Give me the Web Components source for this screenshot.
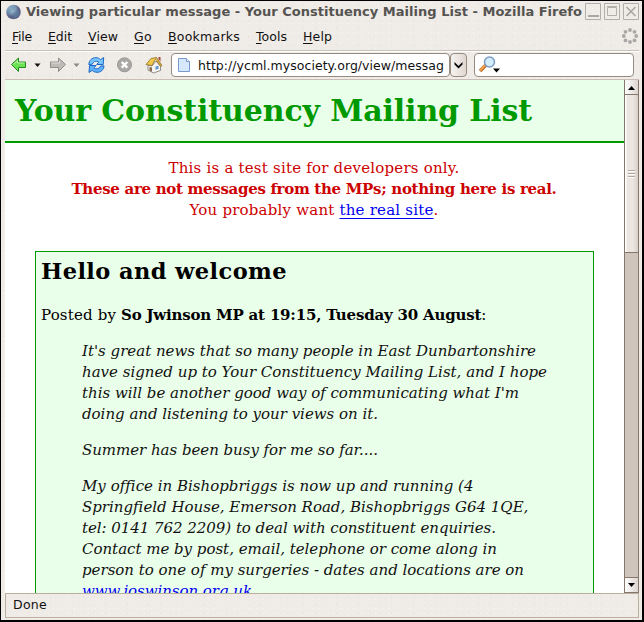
<!DOCTYPE html>
<html lang="en"><head><meta charset="utf-8"><title>Viewing particular message</title>
<style>
html,body{margin:0;width:644px;height:622px;overflow:hidden}
body{font-family:"DejaVu Sans",sans-serif;font-size:12.5px;color:#111}
u{text-underline-offset:2px;text-decoration-thickness:1px}
a{color:#00e;text-decoration:underline;text-decoration-thickness:1px;text-underline-offset:3px}
.byline{display:flex}
</style></head><body>
<browser-window>
<title-bar slot="title"><text-run w="556">Viewing particular message - Your Constituency Mailing List - Mozilla Firefo</text-run></title-bar>
<menu-bar slot="menu">
<text-run w="20"><u>F</u>ile</text-run><text-run w="24"><u>E</u>dit</text-run><text-run w="30"><u>V</u>iew</text-run><text-run w="18"><u>G</u>o</text-run><text-run w="72"><u>B</u>ookmarks</text-run><text-run w="31"><u>T</u>ools</text-run><text-run w="29"><u>H</u>elp</text-run>
</menu-bar>
<tool-bar slot="tools"><text-run w="246">http://ycml.mysociety.org/view/messag</text-run></tool-bar>
<page-view slot="page">
<page-heading><text-run w="517">Your Constituency Mailing List</text-run></page-heading>
<test-notice>
<text-run w="291">This is a test site for developers only.</text-run>
<text-run w="485"><b>These are not messages from the MPs; nothing here is real.</b></text-run>
<text-run w="249">You probably want <a href="#">the real site</a>.</text-run>
</test-notice>
<message-card>
<text-run slot="title" w="246">Hello and welcome</text-run>
<span slot="byline" class="byline"><text-run w="80">Posted by&nbsp;</text-run><text-run w="365"><b>So Jwinson MP at 19:15, Tuesday 30 August</b>:</text-run></span>
<message-para><text-run w="454">It's great news that so many people in East Dunbartonshire</text-run><text-run w="465">have signed up to Your Constituency Mailing List, and I hope</text-run><text-run w="437">this will be another good way of communicating what I'm</text-run><text-run w="296">doing and listening to your views on it.</text-run></message-para>
<message-para><text-run w="296">Summer has been busy for me so far....</text-run></message-para>
<message-para><text-run w="391">My office in Bishopbriggs is now up and running (4</text-run><text-run w="446">Springfield House, Emerson Road, Bishopbriggs G64 1QE,</text-run><text-run w="414">tel: 0141 762 2209) to deal with constituent enquiries.</text-run><text-run w="415">Contact me by post, email, telephone or come along in</text-run><text-run w="442">person to one of my surgeries - dates and locations are on</text-run><text-run w="170"><a href="#">www.joswinson.org.uk</a></text-run></message-para>
</message-card>
</page-view>
<scroll-bar slot="scroll"></scroll-bar>
<status-bar slot="status"><text-run w="34">Done</text-run></status-bar>
</browser-window>
<script>
const define=(name,html)=>customElements.define(name,class extends HTMLElement{
  constructor(){super();this.attachShadow({mode:'open'}).innerHTML=html;}
});
define('browser-window',`<style>
:host{display:grid;box-sizing:border-box;width:644px;height:622px;border:1px solid #000;border-right-width:2px;border-bottom-width:2px;padding:0 3px 2px 4px;grid-template:22px 28px 29px 513px 25px/619px 15px;background-color:#efebe7;
background-image:radial-gradient(circle,#f6f3f0 0 .7px,transparent 1px),radial-gradient(circle,#ece3df 0 .7px,transparent 1px),radial-gradient(circle,#f4f0ec 0 .6px,transparent 1px);background-size:7px 5px,11px 8px,5px 9px}
slot[name=title],slot[name=menu],slot[name=tools],slot[name=status]{grid-column:1/3;display:block}
slot[name=page],slot[name=scroll]{display:block;min-height:0}
</style><slot name="title"></slot><slot name="menu"></slot><slot name="tools"></slot><slot name="page"></slot><slot name="scroll"></slot><slot name="status"></slot>`);
define('title-bar',`<style>
:host{display:flex;box-sizing:border-box;height:22px;padding-bottom:1px;align-items:center;font-weight:bold;font-size:13px;color:#555451}
.globe{margin-right:5px}.btns{margin-left:3px;display:flex;gap:3px}
</style><svg class="globe" width="16" height="16" viewBox="0 0 16 16"><defs><radialGradient id="g" cx=".35" cy=".3"><stop offset="0" stop-color="#c4dde6"/><stop offset=".55" stop-color="#7f9fba"/><stop offset="1" stop-color="#5c6589"/></radialGradient></defs><circle cx="8.5" cy="8" r="7.3" fill="url(#g)"/><path d="M3 5l3-3 4 1-1 3-3 1-1 3-3-1zM10 8l4-1v4l-4 3-2-3z" fill="#5f86a8" opacity=".55"/></svg><slot></slot>
<div class="btns"><svg width="16" height="17"><path d="M.5.5h15v16H.5z" fill="none" stroke="#b2aeaa"/><path d="M3 13h11" stroke="#aaa6a2" stroke-width="2"/></svg><svg width="16" height="17"><path d="M.5.5h15v16H.5zM3.5 4.5h9v8h-9zM3 3.5h10" fill="none" stroke="#b2aeaa"/></svg><svg width="16" height="17"><path d="M.5.5h15v16H.5z" fill="none" stroke="#b2aeaa"/><path d="M3.5 4l9 9m0-9l-9 9" stroke="#aaa6a2" stroke-width="1.6"/></svg></div>`);
define('menu-bar',`<style>
:host{display:flex;box-sizing:border-box;height:28px;padding:0 0 1px 7px;align-items:center;gap:16px;border-bottom:1px solid #c9c2bb}
svg{margin-left:auto}
</style><slot></slot><svg width="18" height="18" viewBox="0 0 18 18" fill="#aaa8a6"><circle cx="9" cy="3" r="1.9"/><circle cx="13.500" cy="4.800" r="1.900"/><circle cx="15.200" cy="9" r="1.900"/><circle cx="13.500" cy="13.400" r="1.900"/><circle cx="9" cy="15" r="1.900"/><circle cx="4.500" cy="13.400" r="1.900"/><circle cx="2.800" cy="9" r="1.900"/><circle cx="4.500" cy="4.800" r="1.900"/></svg>`);
define('tool-bar',`<style>
:host{display:flex;box-sizing:border-box;height:29px;padding:1px 5px 2px 5px;align-items:center;border-top:1px solid #fff;border-bottom:1px solid #c9bdb5}
svg{flex:none}
.url,.search,.drop{box-sizing:border-box;height:24px;border:1px solid #968b7e;border-radius:4px;background:#fff;display:flex;align-items:center}
.url{width:279px;padding-left:5px;margin-left:8px}.url svg{margin-right:7px}
.drop{width:17px;background:linear-gradient(90deg,#f6f3f0,#dfd7d0);justify-content:center}
.search{width:160px;margin-left:7px;padding-left:3px}
</style>
<svg width="18" height="18" viewBox="0 0 18 18"><path d="M1.500 8.500l7-6.500v4h7v5.500h-7v4z" fill="#6be154" stroke="#248b20"/><path d="M3.500 8.300l4-3.600V7h7" fill="none" stroke="#bdf7a6"/></svg>
<svg width="21" height="18"><path d="M6.500 7.500h6l-3 3.500z" fill="#111"/></svg>
<svg width="18" height="18" viewBox="0 0 18 18"><path d="M16.500 8.500l-7-6.500v4h-8v5.500h8v4z" fill="#bdbbb8" stroke="#8f8c89"/><path d="M2.500 7h8V4.700" fill="none" stroke="#ddd"/></svg>
<svg width="21" height="18"><path d="M6.500 7.500h6l-3 3.500z" fill="#888"/></svg>
<svg width="17" height="18" viewBox="0 0 17 18"><path id="r" d="M.8 8.500C1 4.500 4 1.500 8 1.700c2 0 3.500.8 4.500 2l3.200-2.200-.5 7H8.700l2-2.300C9 4.600 5.500 4.800 4.300 8.200z" fill="#79c6ff" stroke="#1c67c5"/><path d="M16 9.800c-.2 4-3.200 6.700-7.200 6.500-2 0-3.500-.8-4.500-2L1 16.500l.5-7H8l-2 2.300c1.700 1.600 5.200 1.400 6.500-1.700z" fill="#5eb0fb" stroke="#1c67c5"/></svg>
<svg style="margin-left:11px" width="17" height="18" viewBox="0 0 17 18"><circle cx="8.500" cy="8.800" r="7" fill="#aaa8a6" stroke="#9a9794"/><path d="M5.700 6l5.600 5.600m0-5.600l-5.600 5.600" stroke="#fff" stroke-width="2.400"/></svg>
<svg style="margin-left:12px" width="18" height="18" viewBox="0 0 18 18"><path d="M3 9l4 1 4-5 4.500 5v4.500L8.500 17 3 14z" fill="#f6f4f0" stroke="#777" stroke-width=".8"/><path d="M1 8.500l5-6 5.500-1L7 9.500z" fill="#f0c84a" stroke="#91722b" stroke-width=".8"/><path d="M11.500 1.500L17 9.500l-1.500.8-4.200-5.300" fill="#d9a93a" stroke="#91722b" stroke-width=".8"/><path d="M4.500 11l2.500.6v4.200l-2.500-1.300z" fill="#8a6a4a"/><path d="M10.500 10.500l3-.8v3l-3 1z" fill="#5f93cc"/><path d="M13.500 1h2v4.500l-2-2.500z" fill="#a7483b"/></svg>
<div class="url"><svg width="14" height="16" viewBox="0 0 14 16"><path d="M1.500 1.500h8l3 3v10h-11z" fill="#d6e8fb" stroke="#7b98cf"/><path d="M9.500 1.500v3h3" fill="#fff" stroke="#7b98cf"/></svg><slot></slot></div>
<div class="drop"><svg width="11" height="8"><path d="M1.500 1l4 4 4-4v2.500l-4 4-4-4z" fill="#000"/></svg></div>
<div class="search"><svg width="24" height="20" viewBox="0 0 24 20"><path d="M2 16l6-6" stroke="#b4692b" stroke-width="3.600"/><path d="M2 15.500l6-6" stroke="#f4a04a" stroke-width="2"/><circle cx="11.500" cy="7" r="5" fill="#d2edfb" stroke="#7e9cc4" stroke-width="1.500"/><path d="M15 13.500h7l-3.500 4z" fill="#000"/></svg></div>`);
define('page-view',`<style>:host{display:block;height:513px;overflow:hidden;background:#fff;font-family:"DejaVu Serif",serif;font-size:15px}</style><slot></slot>`);
define('page-heading',`<style>:host{display:flex;box-sizing:border-box;height:63px;align-items:center;padding:0 0 1px 10px;background:#eaffea;border-bottom:2px solid #090;color:#090;font-size:30px;font-weight:bold}</style><slot></slot>`);
define('test-notice',`<style>:host{display:flex;flex-direction:column;align-items:center;padding:15px 1px 30px 0;line-height:21px;color:#c00}</style><slot></slot>`);
define('message-card',`<style>
:host{display:block;margin:0 30px;height:500px;border:1px solid #090;background:#eaffea;padding:0 5px;color:#000}
.t{font-size:22.500px;font-weight:bold;line-height:38px;height:38px}.b{line-height:21px;padding:15px 0}
.q{display:flex;flex-direction:column;gap:15px;padding-left:41px}
</style><div class="t"><slot name="title"></slot></div><div class="b"><slot name="byline"></slot></div><div class="q"><slot></slot></div>`);
define('message-para',`<style>:host{display:flex;flex-direction:column;font-style:italic;line-height:21px;color:#111}</style><slot></slot>`);
define('scroll-bar',`<style>
:host{display:flex;flex-direction:column;box-sizing:border-box;height:513px;border:1px solid #85776b;border-top:0;background:#cfc5bd}
.b{height:14px;display:flex;align-items:center;justify-content:center;background:linear-gradient(90deg,#fff,#ddd4cf);flex:none}
.thumb{height:157px;border:solid #85776b;border-width:1px 0;background:linear-gradient(90deg,#fff 0 1px,#ece6e2 2px 8px,#d8cec8);display:flex;align-items:center;justify-content:center}
.f{flex:1}.end{border-top:1px solid #85776b}
</style><div class="b"><svg width="9" height="5"><path d="M1 5h7L4.500 1z"/></svg></div><div class="thumb"><svg width="7" height="9"><path d="M0 1.500h7M0 4.500h7M0 7.500h7" stroke="#b2a69c"/><path d="M0 2.500h7M0 5.500h7M0 8.500h7" stroke="#fff"/></svg></div><div class="f"></div><div class="b end"><svg width="9" height="5"><path d="M1 0h7L4.500 4z"/></svg></div>`);
define('status-bar',`<style>:host{display:flex;box-sizing:border-box;height:25px;align-items:center;padding:0 0 2px 7px;border:1px solid #b9b09e}</style><slot></slot>`);
/* A single line whose tracking is set so that it fills the width in its "w" attribute. */
customElements.define('text-run',class extends HTMLElement{
  constructor(){super();this.attachShadow({mode:'open'}).innerHTML='<style>:host{display:block;width:max-content;white-space:nowrap;flex:none}</style><slot></slot>';}
  connectedCallback(){
    const w=+this.getAttribute('w'),n=this.textContent.length;
    this.style.letterSpacing=((w-this.getBoundingClientRect().width)/n)+'px';
  }
});
</script></body></html>
